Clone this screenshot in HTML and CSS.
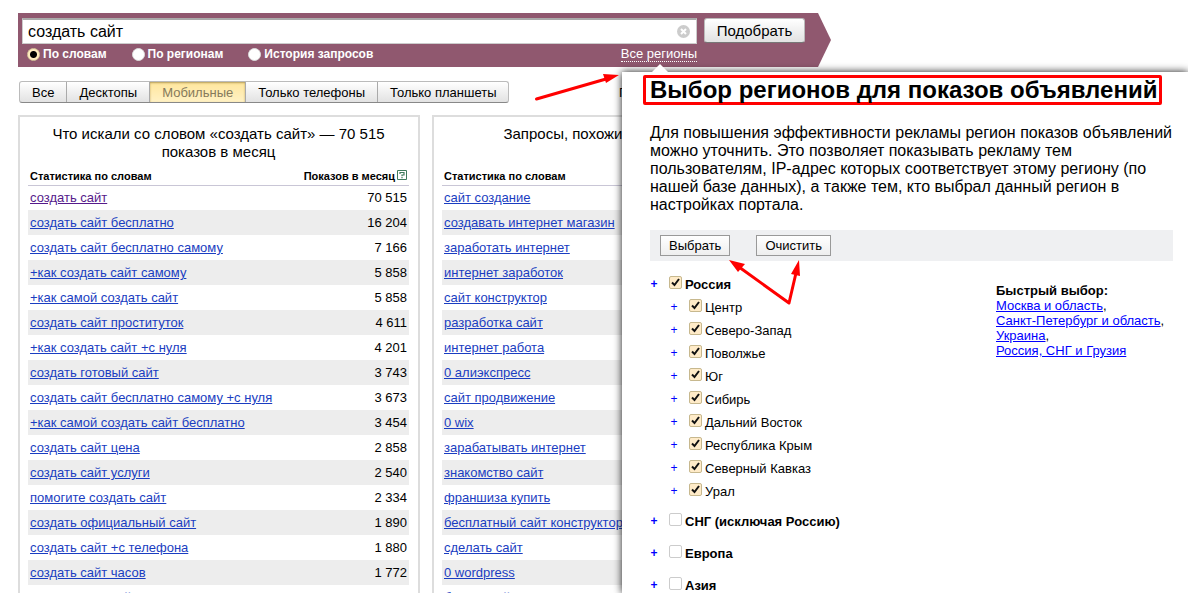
FILE: index.html
```html
<!DOCTYPE html>
<html lang="ru">
<head>
<meta charset="utf-8">
<title>Подбор слов</title>
<link rel="stylesheet" href="styles.css">
</head>
<body>
<div class="page">
<main class="wordstat">
  <form class="search">
    <div class="search-main">
      <div class="field">
        <input class="query" type="text" value="создать сайт" aria-label="Запрос">
        <button class="clear" type="button" aria-label="Очистить запрос">
          <svg viewBox="0 0 13 13"><circle cx="6.5" cy="6.5" r="6.5" fill="#ccc"/><path d="M4 4l5 5M9 4l-5 5" stroke="#fff" stroke-width="2"/></svg>
        </button>
      </div>
      <div class="modes">
        <label class="mode"><input type="radio" name="mode" checked>По словам</label>
        <label class="mode"><input type="radio" name="mode">По регионам</label>
        <label class="mode"><input type="radio" name="mode">История запросов</label>
        <a class="regions-link" href="#regions">Все регионы</a>
      </div>
    </div>
    <button class="submit" type="button">Подобрать</button>
  </form>
  <div class="filters">
    <div class="tabs">
      <button class="tab" type="button">Все</button>
      <button class="tab" type="button">Десктопы</button>
      <button class="tab tab-active" type="button">Мобильные</button>
      <button class="tab" type="button">Только телефоны</button>
      <button class="tab" type="button">Только планшеты</button>
    </div>
    <span class="updated">Последнее обновление: 01.06.2016</span>
  </div>
  <div class="results">
    <section class="box">
      <h2 class="box-title">Что искали со словом «создать сайт» — 70 515 показов в месяц</h2>
      <table class="stats">
        <thead><tr><th>Статистика по словам</th><th class="num">Показов в месяц<button class="help" type="button" aria-label="Справка"><svg viewBox="0 0 10 10"><path d="M.5.5h9v9h-9z" fill="#fff" stroke="#3f7a5c"/><path d="M3 4V2.500h4V5H5v1.300M5 7v1.200" fill="none" stroke="#3f7a5c" stroke-width="1.2"/></svg></button></th></tr></thead>
        <tbody>
          <tr><td><a class="visited" href="#">создать сайт</a></td><td class="num">70 515</td></tr>
          <tr><td><a href="#">создать сайт бесплатно</a></td><td class="num">16 204</td></tr>
          <tr><td><a href="#">создать сайт бесплатно самому</a></td><td class="num">7 166</td></tr>
          <tr><td><a href="#">+как создать сайт самому</a></td><td class="num">5 858</td></tr>
          <tr><td><a href="#">+как самой создать сайт</a></td><td class="num">5 858</td></tr>
          <tr><td><a href="#">создать сайт проституток</a></td><td class="num">4 611</td></tr>
          <tr><td><a href="#">+как создать сайт +с нуля</a></td><td class="num">4 201</td></tr>
          <tr><td><a href="#">создать готовый сайт</a></td><td class="num">3 743</td></tr>
          <tr><td><a href="#">создать сайт бесплатно самому +с нуля</a></td><td class="num">3 673</td></tr>
          <tr><td><a href="#">+как самой создать сайт бесплатно</a></td><td class="num">3 454</td></tr>
          <tr><td><a href="#">создать сайт цена</a></td><td class="num">2 858</td></tr>
          <tr><td><a href="#">создать сайт услуги</a></td><td class="num">2 540</td></tr>
          <tr><td><a href="#">помогите создать сайт</a></td><td class="num">2 334</td></tr>
          <tr><td><a href="#">создать официальный сайт</a></td><td class="num">1 890</td></tr>
          <tr><td><a href="#">создать сайт +с телефона</a></td><td class="num">1 880</td></tr>
          <tr><td><a href="#">создать сайт часов</a></td><td class="num">1 772</td></tr>
          <tr><td><a href="#">+как создать сайт</a></td><td class="num">1 758</td></tr>
        </tbody>
      </table>
    </section>
    <section class="box">
      <h2 class="box-title">Запросы, похожие на «создать сайт»</h2>
      <table class="stats">
        <thead><tr><th>Статистика по словам</th></tr></thead>
        <tbody>
          <tr><td><a href="#">сайт создание</a></td></tr>
          <tr><td><a href="#">создавать интернет магазин</a></td></tr>
          <tr><td><a href="#">заработать интернет</a></td></tr>
          <tr><td><a href="#">интернет заработок</a></td></tr>
          <tr><td><a href="#">сайт конструктор</a></td></tr>
          <tr><td><a href="#">разработка сайт</a></td></tr>
          <tr><td><a href="#">интернет работа</a></td></tr>
          <tr><td><a href="#">0 алиэкспресс</a></td></tr>
          <tr><td><a href="#">сайт продвижение</a></td></tr>
          <tr><td><a href="#">0 wix</a></td></tr>
          <tr><td><a href="#">зарабатывать интернет</a></td></tr>
          <tr><td><a href="#">знакомство сайт</a></td></tr>
          <tr><td><a href="#">франшиза купить</a></td></tr>
          <tr><td><a href="#">бесплатный сайт конструктор</a></td></tr>
          <tr><td><a href="#">сделать сайт</a></td></tr>
          <tr><td><a href="#">0 wordpress</a></td></tr>
          <tr><td><a href="#">бизнес сайт</a></td></tr>
        </tbody>
      </table>
    </section>
  </div>
</main>

<aside class="popup" id="regions">
  <h1 class="popup-title">Выбор регионов для показов объявлений</h1>
  <p class="popup-text">Для повышения эффективности рекламы регион показов объявлений можно уточнить. Это позволяет показывать рекламу тем пользователям, IP-адрес которых соответствует этому региону (по нашей базе данных), а также тем, кто выбрал данный регион в настройках портала.</p>
  <div class="actions">
    <button class="action" type="button">Выбрать</button>
    <button class="action" type="button">Очистить</button>
  </div>
  <div class="choice">
    <ul class="tree">
      <li class="root"><div class="node"><button class="plus" type="button">+</button><label><input type="checkbox" checked>Россия</label></div>
        <ul class="children">
          <li class="node"><button class="plus" type="button">+</button><label><input type="checkbox" checked>Центр</label></li>
          <li class="node"><button class="plus" type="button">+</button><label><input type="checkbox" checked>Северо-Запад</label></li>
          <li class="node"><button class="plus" type="button">+</button><label><input type="checkbox" checked>Поволжье</label></li>
          <li class="node"><button class="plus" type="button">+</button><label><input type="checkbox" checked>Юг</label></li>
          <li class="node"><button class="plus" type="button">+</button><label><input type="checkbox" checked>Сибирь</label></li>
          <li class="node"><button class="plus" type="button">+</button><label><input type="checkbox" checked>Дальний Восток</label></li>
          <li class="node"><button class="plus" type="button">+</button><label><input type="checkbox" checked>Республика Крым</label></li>
          <li class="node"><button class="plus" type="button">+</button><label><input type="checkbox" checked>Северный Кавказ</label></li>
          <li class="node"><button class="plus" type="button">+</button><label><input type="checkbox" checked>Урал</label></li>
        </ul>
      </li>
      <li class="root"><div class="node"><button class="plus" type="button">+</button><label><input type="checkbox">СНГ (исключая Россию)</label></div></li>
      <li class="root"><div class="node"><button class="plus" type="button">+</button><label><input type="checkbox">Европа</label></div></li>
      <li class="root"><div class="node"><button class="plus" type="button">+</button><label><input type="checkbox">Азия</label></div></li>
    </ul>
    <div class="quick">
      <b>Быстрый выбор:</b><br>
      <a href="#">Москва и область</a>,<br>
      <a href="#">Санкт-Петербург и область</a>,<br>
      <a href="#">Украина</a>,<br>
      <a href="#">Россия, СНГ и Грузия</a>
    </div>
  </div>
</aside>

<svg class="arrows" viewBox="0 0 1188 593" aria-hidden="true">
  <g fill="none" stroke="#f00" stroke-width="3" stroke-linecap="round" stroke-linejoin="round">
    <path d="M536.500 99L606 79"/>
    <path d="M739 267L789 303L796 273"/>
  </g>
  <path fill="#f00" d="M619 75L603 74L606 83ZM729 260L745 264L738 272ZM799 260L791 274L800 276Z"/>
</svg>
</div>
</body>
</html>
```
FILE: styles.css
```css
* { box-sizing: border-box; }
body {
  margin: 0;
  background: #fff;
  color: #000;
  font: 13px/15px "Liberation Sans", Arial, sans-serif;
}
button, input { margin: 0; padding: 0; font: inherit; color: inherit; }
.page { position: relative; height: 100vh; overflow: hidden; padding: 13px 0 0 18px; }
.wordstat { max-width: 816px; }

.search {
  display: flex;
  align-items: flex-start;
  gap: 7px;
  margin-right: 3px;
  padding: 5px 26px 2px 4px;
  background: #90586f;
  clip-path: polygon(0 0, calc(100% - 13px) 0, 100% 50%, calc(100% - 13px) 100%, 0 100%);
}
.search-main { flex: 1; }
.field {
  display: flex;
  align-items: center;
  height: 26px;
  padding: 0 6px 0 5px;
  background: #fff;
  border: 1px solid #ccc;
  border-top: 2px solid #aaa;
}
.query { flex: 1; height: 22px; border: 0; outline: 0; background: none; font-size: 16px; }
.clear { width: 13px; height: 13px; border: 0; background: none; }
.clear svg, .help svg { display: block; width: 100%; height: 100%; }
.modes {
  display: flex;
  height: 21px;
  padding-left: 5px;
  align-items: center;
  gap: 25px;
  color: #fff;
}
.mode { display: flex; align-items: center; gap: 3px; font-weight: bold; font-size: 12px; }
.mode input {
  appearance: none;
  width: 13px;
  height: 13px;
  border-radius: 50%;
  border: 1px solid #ddd;
  background: #fff;
}
.mode input:checked { border-color: #d8c79c; background: radial-gradient(circle, #000 3px, #ffebbf 4px); }
.regions-link { margin-left: auto; color: #fff; text-decoration: none; border-bottom: 1px dotted #fff; line-height: 14px; }
.submit {
  width: 101px;
  height: 25px;
  border: 1px solid #bbb;
  border-bottom-color: #777;
  border-radius: 3px;
  background: linear-gradient(#fff, #e2e2e2);
  font-size: 15px;
}

.filters { display: flex; align-items: center; justify-content: space-between; margin: 14px 0 12px 1px; }
.tabs {
  display: flex;
  height: 22px;
  border: 1px solid #bbb;
  border-bottom-color: #888;
  border-radius: 3px;
  background: linear-gradient(#fff, #e2e2e2);
}
.tab { padding: 0 12px; border: 0; border-right: 1px solid #aaa; background: none; }
.tab:last-child { border-right: 0; }
.tab-active { background: linear-gradient(#ffe69c, #fff1c4); color: #857a5c; box-shadow: inset 0 1px 2px #b59d58; }

.results { display: grid; grid-template-columns: 1fr 1fr; gap: 12px; }
.box { border: 2px solid #ddd; padding: 8px 9px 0 8px; min-height: 520px; }
.box-title { margin: 0; height: 44px; padding: 0 12px; text-align: center; font-size: 15px; line-height: 18px; font-weight: normal; }
.stats { width: 100%; border-collapse: collapse; }
.stats th { height: 16px; padding: 0 2px; border-bottom: 1px solid #c9c6d6; text-align: left; font-size: 11px; line-height: 15px; white-space: nowrap; }
.stats td { height: 25px; padding: 0 2px; }
.stats tbody tr:nth-child(even) { background: #ededed; }
.stats .num { text-align: right; }
.help { width: 10px; height: 10px; margin-left: 2px; border: 0; background: none; }
.stats a { color: #1a3dc1; }
.stats .visited { color: #551a8b; }

.popup {
  position: absolute;
  left: 622px;
  top: 72px;
  right: 0;
  bottom: 0;
  padding: 3px 15px 0 28px;
  background: #fff;
  box-shadow: 0 0 8px rgba(0, 0, 0, .9);
}
.popup::before {
  content: "";
  position: absolute;
  left: 30px;
  top: -8px;
  border: 8px solid transparent;
  border-top: 0;
  border-bottom-color: #fff;
}
.popup-title {
  width: fit-content;
  margin: 0 0 19px -7px;
  padding: 0 2px 0 4px;
  border: 3px solid #f00;
  border-radius: 2px;
  font-size: 24px;
  line-height: 24px;
  white-space: nowrap;
}
.popup-text { margin: 0 0 16px; font-size: 16px; line-height: 18px; }
.actions { display: flex; gap: 26px; padding: 5px 10px; background: #eff0f2; }
.action { height: 21px; padding: 0 8px; border: 1px solid #999; background: linear-gradient(#fff, #eee); }
.choice { display: flex; justify-content: space-between; padding-top: 12px; }
.tree, .children { margin: 0; padding: 0; list-style: none; }
.children { padding-left: 20px; font-weight: normal; }
.root { margin-bottom: 9px; font-weight: bold; }
.root:first-child { margin-bottom: 7px; }
.node { display: flex; height: 23px; align-items: center; gap: 11px; }
.node label { display: flex; align-items: center; gap: 3px; }
.plus { width: 8px; border: 0; background: none; color: #00f; font-size: 12px; font-weight: inherit; text-align: center; }
.node input {
  appearance: none;
  width: 13px;
  height: 13px;
  margin-bottom: 4px;
  border: 1px solid #ccc;
  border-radius: 2px;
  background: #fff;
}
.node input:checked {
  border-color: #c7b88e;
  background: #ffebc8 url("data:image/svg+xml,%3Csvg xmlns='http://www.w3.org/2000/svg' viewBox='0 0 11 11'%3E%3Cpath d='M2 5.500L4.500 8L9 2' fill='none' stroke='%23111' stroke-width='2'/%3E%3C/svg%3E") center / 11px 11px no-repeat;
}
.quick { width: 177px; padding-top: 10px; }
.quick a { color: #00f; }
.arrows { position: absolute; left: 0; top: 0; width: 1188px; height: 593px; pointer-events: none; }
```
